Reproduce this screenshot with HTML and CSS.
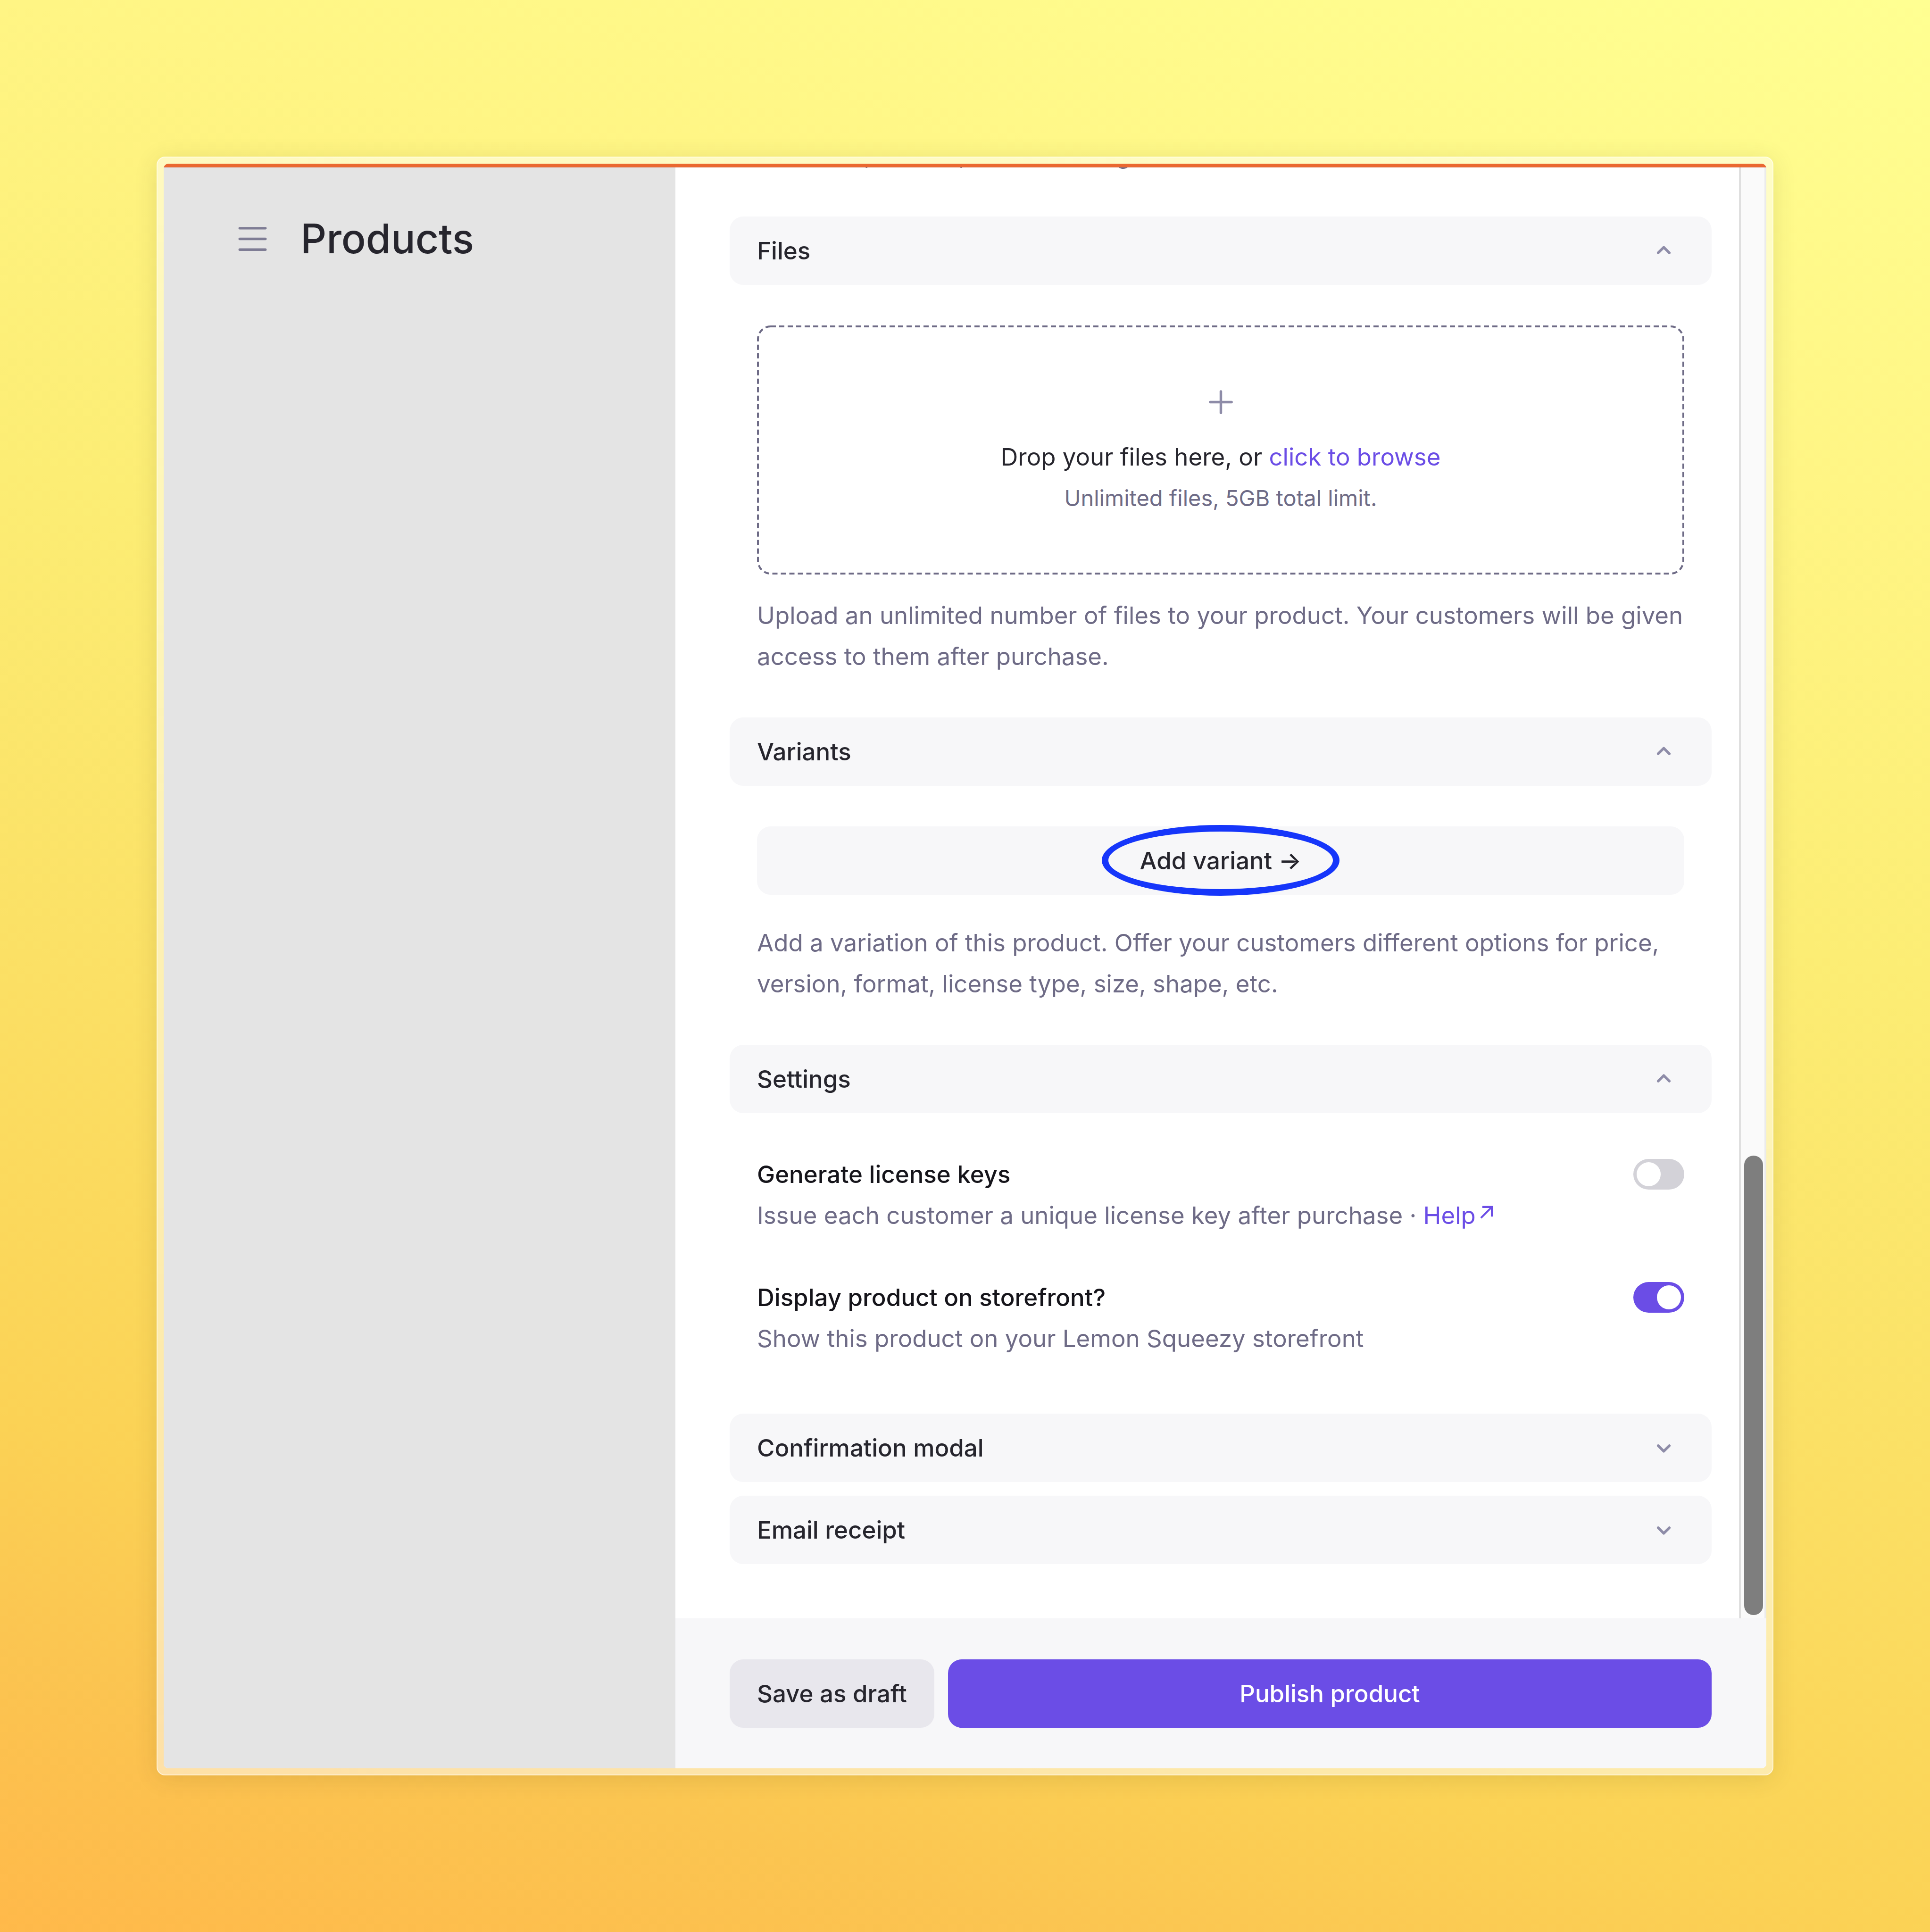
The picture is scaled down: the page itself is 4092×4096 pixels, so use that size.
FILE: index.html
```html
<!DOCTYPE html>
<html lang="en">
<head>
<meta charset="utf-8">
<title>Products</title>
<link rel="stylesheet" href="styles.css">
</head>
<body>
<div class="frame">
  <div class="window">
    <div class="accent"></div>
    <div class="app">
      <aside class="sidebar">
        <header class="page-head">
          <button class="icon-button" type="button" aria-label="Menu">
            <svg class="icon" viewBox="0 0 24 24"><path class="menu-lines" d="M4.5 5.75h15M4.5 12h15M4.5 18.25h15"/></svg>
          </button>
          <h1 class="title">Products</h1>
        </header>
      </aside>
      <main class="panel">
        <div class="scroller">
          <form class="content" id="product">
            <p class="help media-help">Add films, movies, and recordings</p>

            <button class="section" type="button">Files
              <svg class="icon" viewBox="0 0 24 24"><path d="M8.75 13.25 12 10l3.25 3.25"/></svg>
            </button>
            <div class="section-body">
              <div class="dropzone">
                <svg class="dashes" aria-hidden="true"><rect class="dash-line"/></svg>
                <svg class="icon" viewBox="0 0 24 24"><path d="M12 5.75v12.5M5.75 12h12.5"/></svg>
                <p class="drop-text">Drop your files here, or <a class="link" href="#">click to browse</a></p>
                <p class="drop-limit">Unlimited files, 5GB total limit.</p>
              </div>
              <p class="help files-help">Upload an unlimited number of files to your product. Your customers will be given access to them after purchase.</p>
            </div>

            <button class="section" type="button">Variants
              <svg class="icon" viewBox="0 0 24 24"><path d="M8.75 13.25 12 10l3.25 3.25"/></svg>
            </button>
            <div class="section-body">
              <button class="add-variant" type="button">Add variant →<span class="highlight"></span></button>
              <p class="help variants-help">Add a variation of this product. Offer your customers different options for price, version, format, license type, size, shape, etc.</p>
            </div>

            <button class="section" type="button">Settings
              <svg class="icon" viewBox="0 0 24 24"><path d="M8.75 13.25 12 10l3.25 3.25"/></svg>
            </button>
            <div class="section-body settings">
              <div class="setting">
                <div>
                  <label class="setting-name" for="keys">Generate license keys</label>
                  <p class="help">Issue each customer a unique license key after purchase · <a class="link" href="#">Help<svg class="external" viewBox="0 0 10 10"><path d="M1 9 9 1M2 1h7v7"/></svg></a></p>
                </div>
                <input class="toggle" type="checkbox" id="keys">
              </div>
              <div class="setting">
                <div>
                  <label class="setting-name" for="storefront">Display product on storefront?</label>
                  <p class="help">Show this product on your Lemon Squeezy storefront</p>
                </div>
                <input class="toggle" type="checkbox" id="storefront" checked>
              </div>
            </div>

            <div class="collapsed">
              <button class="section" type="button">Confirmation modal
                <svg class="icon" viewBox="0 0 24 24"><path d="M8.75 10.75 12 14l3.25-3.25"/></svg>
              </button>
              <button class="section" type="button">Email receipt
                <svg class="icon" viewBox="0 0 24 24"><path d="M8.75 10.75 12 14l3.25-3.25"/></svg>
              </button>
            </div>
          </form>
          <div class="scrollbar"><div class="thumb"></div></div>
        </div>
        <footer class="actions">
          <button class="button draft" type="button">Save as draft</button>
          <button class="button publish" type="submit" form="product">Publish product</button>
        </footer>
      </main>
    </div>
  </div>
</div>
</body>
</html>
```
FILE: styles.css
```css
* {
  box-sizing: border-box;
  margin: 0;
}

body {
  display: flex;
  min-height: 100vh;
  padding: 332px;
  background: linear-gradient(15deg, #ffb94a 0%, #fbc551 12%, #fbd255 21%, #fbe065 40%, #fced74 60%, #fff584 79%, #ffff92 100%);
  color: #26252d;
  font: 400 51px/87px Inter, "Liberation Sans", sans-serif;
  font-optical-sizing: none;
}

button {
  border: 0;
  color: inherit;
  font: inherit;
  font-weight: 500;
}

.frame {
  display: flex;
  flex: 1;
  min-width: 0;
  padding: 13px;
  border: 2px solid rgba(255, 255, 255, 0.5);
  border-radius: 18px;
  background: rgba(255, 255, 255, 0.5);
  box-shadow: 0 6px 50px rgba(60, 60, 0, 0.12);
}

.window {
  display: flex;
  flex: 1;
  flex-direction: column;
  min-width: 0;
  border-radius: 10px;
  overflow: hidden;
  background: #fff;
}

.accent {
  height: 8px;
  border-bottom: 1px solid #d9704c;
  background: #ea6830;
}

.app {
  display: grid;
  flex: 1;
  grid-template-columns: 1085px 1fr;
}

.sidebar {
  padding: 93px 145px;
  background: #e4e4e4;
}

.page-head {
  display: flex;
  align-items: center;
  gap: 58px;
}

.icon-button {
  display: flex;
  padding: 0;
  background: none;
}

.title {
  font-size: 86px;
  font-weight: 500;
  line-height: 116px;
}

.icon {
  display: block;
  flex: none;
  width: 87px;
  height: 87px;
  fill: none;
  stroke: #8e8ca8;
  stroke-width: 1.5;
  stroke-linecap: round;
  stroke-linejoin: round;
}

.menu-lines {
  stroke: #7e7c94;
}

.panel {
  display: flex;
  flex-direction: column;
  min-width: 0;
}

.scroller {
  display: flex;
  flex: 1;
  overflow: hidden;
}

.content {
  flex: 1;
  min-width: 0;
  padding: 0 58px 115px 115px;
}

.media-help {
  margin: -70px 58px 87px;
}

.section {
  display: flex;
  align-items: center;
  justify-content: space-between;
  width: 100%;
  height: 145px;
  padding: 0 58px;
  border-radius: 29px;
  background: #f7f7f9;
  text-align: left;
}

.section-body {
  padding: 86px 58px;
}

.help {
  color: #6e6b86;
}

.link {
  color: #6b4de6;
  text-decoration: none;
}

.dropzone {
  position: relative;
  display: flex;
  flex-direction: column;
  align-items: center;
  padding: 119px 58px;
  text-align: center;
}

.dashes {
  position: absolute;
  inset: 0;
  width: 100%;
  height: 100%;
}

.dash-line {
  x: 2px;
  y: 2px;
  width: calc(100% - 4px);
  height: calc(100% - 4px);
  rx: 27px;
  fill: none;
  stroke: #6e6b86;
  stroke-width: 4px;
  stroke-dasharray: 11px 7px;
}

.drop-text {
  margin-top: 29px;
}

.drop-limit {
  color: #6e6b86;
  font-size: 47px;
}

.files-help {
  margin-top: 43px;
}

.add-variant {
  position: relative;
  width: 100%;
  height: 145px;
  border-radius: 29px;
  background: #f7f7f9;
}

.highlight {
  position: absolute;
  inset: -3px 0 -2px;
  width: 504px;
  margin: 0 auto;
  border: 14px solid #1636fa;
  border-radius: 50%;
}

.variants-help {
  margin-top: 58px;
}

.settings {
  display: flex;
  flex-direction: column;
  gap: 87px;
  padding-bottom: 116px;
}

.setting {
  display: flex;
  align-items: flex-start;
  justify-content: space-between;
}

.setting-name {
  display: block;
  color: #15141a;
  font-weight: 500;
}

.external {
  width: 29px;
  height: 29px;
  margin-left: 8px;
  vertical-align: 10px;
  fill: none;
  stroke: currentColor;
  stroke-width: 1.4;
}

.toggle {
  appearance: none;
  width: 108px;
  height: 65px;
  margin: 11px 0;
  padding: 7px;
  border-radius: 33px;
  background: #d3d2d8;
}

.toggle::before {
  content: "";
  display: block;
  width: 51px;
  height: 51px;
  border-radius: 50%;
  background: #fff;
}

.toggle:checked {
  background: #6b4de6;
}

.toggle:checked::before {
  margin-left: auto;
}

.collapsed {
  display: grid;
  gap: 29px;
}

.scrollbar {
  display: flex;
  align-items: flex-end;
  justify-content: flex-end;
  width: 58px;
  padding: 7px 3px;
  border: solid;
  border-width: 0 4px;
  border-color: #dfdfdf #ebebeb #dfdfdf #dfdfdf;
  background: #fafafa;
}

.thumb {
  width: 40px;
  height: 31.8%;
  border-radius: 20px;
  background: #7e7e7e;
}

.actions {
  display: flex;
  gap: 29px;
  padding: 87px 116px 86px 115px;
  background: #f7f7f9;
}

.button {
  height: 145px;
  padding: 0 58px;
  border-radius: 29px;
}

.draft {
  background: #e8e7ed;
}

.publish {
  flex: 1;
  background: #6b4de6;
  color: #fff;
}
```
